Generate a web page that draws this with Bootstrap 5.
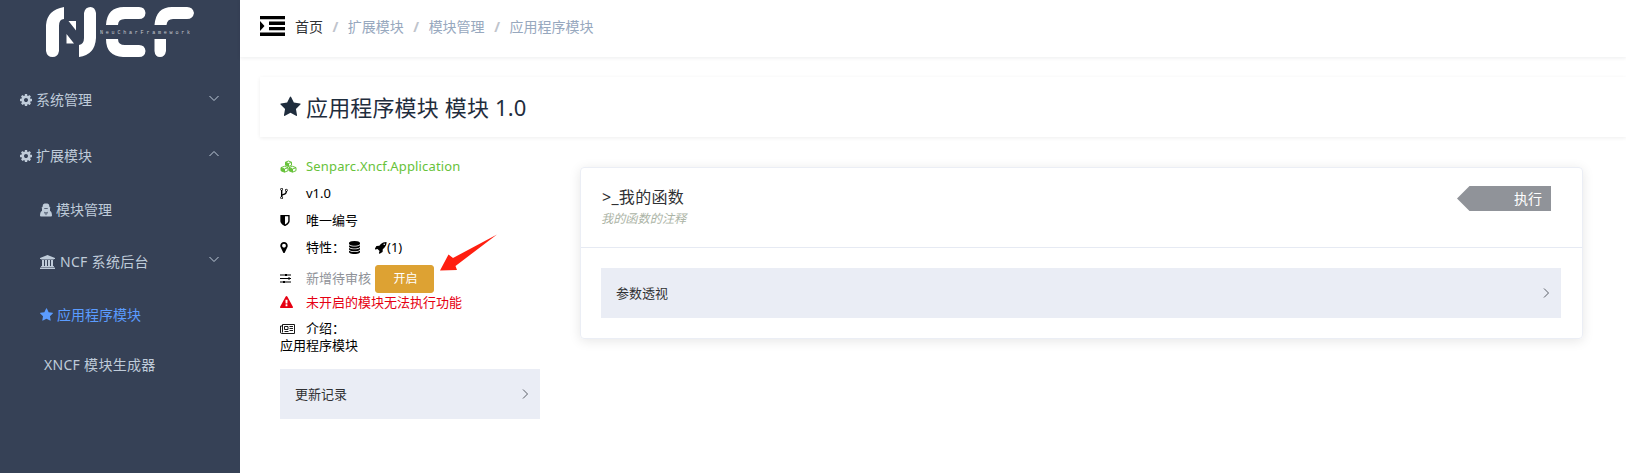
<!DOCTYPE html>
<html lang="zh-CN">
<head>
<meta charset="utf-8">
<meta name="viewport" content="width=device-width, initial-scale=1">
<title>NCF</title>
<link href="https://cdn.jsdelivr.net/npm/bootstrap@5.3.0/dist/css/bootstrap.min.css" rel="stylesheet">
<style>
body{font-family:"Noto Sans","Noto Sans CJK SC",sans-serif;font-size:13px;line-height:17px;color:#000;background:#fff;height:473px;overflow:hidden}
svg{display:block;flex:none;fill:currentColor}
.side{width:240px;height:473px;background:#364156;color:#bfcbd9;font-size:14px;line-height:20px}
.logo{margin:7px 0 0 46px}
.menu{margin-top:15px}
.menu a{color:inherit;text-decoration:none;display:flex;align-items:center;height:56px;padding:0 20px}
.menu a.sub{height:53px;padding-left:40px;position:static}
.menu a.first{height:51px}
.menu a.on{color:#5b9cff}
.menu span{white-space:pre}
.wide{letter-spacing:.3px}
.chev{fill:none;stroke:currentColor;stroke-width:1}
.menu .chev{margin-top:-5px}
.top{height:57px;box-shadow:0 1px 4px rgba(0,21,41,.08);padding:0 0 5px 20px;font-size:14px}
.crumb{color:#97a8be}
.crumb i{font-style:normal;font-weight:700;color:#c0c4cc;margin:0 9.5px}
.titlebox{margin:20px 0 0 20px;height:60px;padding:0 0 1px 20px;box-shadow:0 1px 4px rgba(0,0,0,.07);color:#1f2d3d;font-size:22px;line-height:30px}
.info{width:260px;margin-left:40px;padding-top:16px}
.line{height:27px;display:flex;align-items:center}
.ic{width:26px;flex:none}
.openbtn{--bs-btn-bg:#dda233;--bs-btn-color:#fff;--bs-btn-border-color:#dda233;--bs-btn-font-size:12px;--bs-btn-padding-y:0;--bs-btn-padding-x:0;width:59px;height:28px;line-height:1;--bs-btn-border-radius:3px;margin:1px 0 0 4px;padding-left:2px}
.fold{background:#eaedf5;height:50px;padding:0 11px 0 15px;color:#303133}
.fold .chev{stroke:#5a5e66}
.arrow{position:absolute;left:440px;top:233px;color:#ff1f10}
.fn{width:1003px;margin:30px 0 0 40px;height:172px;border:1px solid #ebeef5;border-radius:4px;box-shadow:0 2px 12px rgba(0,0,0,.1);color:#303133}
.fnhead{height:80px;border-bottom:1px solid #e6eaf3;padding:18px 31px 0 21px}
.run{width:94px;height:25px;background:#909399;color:#fff;font-size:14px;line-height:25px;padding-right:9px;clip-path:polygon(0 50%,12.5px 0,100% 0,100% 100%,12.5px 100%)}
.note{font-style:italic;color:#acb4a6;font-size:12.2px;line-height:16px;margin:3px 0 0 -1px}
</style>
</head>
<body>
<svg class="d-none">
<symbol id="cog" viewBox="128 0 1536 1792"><path d="M1152 896q0-106-75-181t-181-75-181 75-75 181 75 181 181 75 181-75 75-181zm512-109v222q0 12-8 23t-20 13l-185 28q-19 54-39 91 35 50 107 138 10 12 10 25t-9 23q-27 37-99 108t-94 71q-12 0-26-9l-138-108q-44 23-91 38-16 136-29 186-7 28-36 28h-222q-14 0-24.500-8.500t-11.500-21.500l-28-184q-49-16-90-37l-141 107q-10 9-25 9-14 0-25-11-126-114-165-168-7-10-7-23 0-12 8-23 15-21 51-66.500t54-70.500q-27-50-41-99l-183-27q-13-2-21-12.500t-8-23.500v-222q0-12 8-23t19-13l186-28q14-46 39-92-40-57-107-138-10-12-10-24 0-10 9-23 26-36 98.500-107.500t94.500-71.500q13 0 26 10l138 107q44-23 91-38 16-136 29-186 7-28 36-28h222q14 0 24.500 8.500t11.500 21.500l28 184q49 16 90 37l142-107q9-9 24-9 13 0 25 10 129 119 165 170 7 8 7 22 0 12-8 23-15 21-51 66.500t-54 70.500q26 50 41 98l183 28q13 2 21 12.500t8 23.500z"/></symbol>
<symbol id="star" viewBox="64 0 1664 1792"><path d="M1728 647q0 22-26 48l-363 354 86 500q1 7 1 20 0 21-10.500 35.500t-30.500 14.500q-19 0-40-12l-449-236-449 236q-22 12-40 12-21 0-31.500-14.500t-10.500-35.500q0-6 2-20l86-500-364-354q-25-27-25-48 0-37 56-46l502-73 225-455q19-41 49-41t49 41l225 455 502 73q56 9 56 46z"/></symbol>
</svg>
<div class="d-flex">
<aside class="side flex-shrink-0">
<svg class="logo" width="148" height="50" viewBox="0 0 148 50" fill="#fff" style="color:#fff">
<path d="M18 0V12Q13 12 13 19V44Q12 50 6.500 50Q1 50 0 44V18Q1 3 18 0Z"/>
<path d="M22.500 14H30V23.500ZM20.500 27L28 36.500H20.500Z"/>
<path d="M38 6Q39 0 44.500 0Q49 0 50 6V31Q49 48 33 50V38Q38 37 38 31Z"/>
<path d="M60 18Q61 0 78 0H93Q99 0 99.500 6Q99 12 93 12H79Q72 12 72 18ZM60 32H72Q72 38 79 38H93Q99 38 99.500 44Q99 50 93 50H77Q60 49 60 32Z"/>
<path d="M108.500 18Q110 0 126 0H141Q147 0 148 6Q147 12 141 12H127Q121 12 120.500 18ZM108.500 32H120V44Q119 50 114 50Q109 50 108.500 44Z"/>
<text x="54" y="27" font-family="Liberation Mono" font-size="5" textLength="90" opacity=".7">NeuCharFramework</text>
</svg>
<nav class="menu">
<a href="#"><svg width="12" height="14"><use href="#cog"/></svg><span class="ms-1">系统管理</span><svg class="chev ms-auto" width="12" height="8"><path d="M1.500 2L6 6.500L10.500 2"/></svg></a>
<a href="#"><svg width="12" height="14"><use href="#cog"/></svg><span class="ms-1">扩展模块</span><svg class="chev ms-auto" width="12" height="8"><path d="M1.500 6L6 1.500L10.500 6"/></svg></a>
<a class="sub first" href="#"><svg width="12" height="14" viewBox="0 0 12 14"><path fill-rule="evenodd" d="M3 1.500L4.500 .5H7.500L9 1.500L9.500 4L10.500 4.700L10 5.500V7.800L11.300 9Q12 10.500 12 12.500Q12 13.500 11 13.500H1Q0 13.500 0 12.500Q0 10.500 .7 9L2 7.800V5.500L1.500 4.700L2.500 4ZM4 5.300L5 6L6 5.500L7 6L8 5.300L7.500 4.900H4.500ZM4.200 8.700L5.300 12.500L5.700 9.300ZM7.800 8.700L6.300 9.300L6.700 12.500Z"/></svg><span class="ms-1">模块管理</span></a>
<a class="sub" href="#"><svg width="15" height="14" viewBox="0 0 1920 1792"><path d="M960 0l960 384v128h-128q0 26-20.500 45t-48.500 19h-1526q-28 0-48.500-19t-20.500-45h-128v-128zm-704 640h256v768h128v-768h256v768h128v-768h256v768h128v-768h256v768h59q28 0 48.500 19t20.500 45v64h-1664v-64q0-26 20.500-45t48.500-19h59v-768zm1595 960q28 0 48.500 19t20.500 45v128h-1920v-128q0-26 20.500-45t48.500-19h1782z"/></svg><span class="wide" style="margin-left:5px">NCF 系统后台</span><svg class="chev ms-auto" width="12" height="8"><path d="M1.500 2L6 6.500L10.500 2"/></svg></a>
<a class="sub on" href="#"><svg width="13" height="14"><use href="#star"/></svg><span class="ms-1">应用程序模块</span></a>
<a class="sub" href="#" style="padding-left:44px;height:47px"><span class="wide">XNCF 模块生成器</span></a>
</nav>
</aside>
<main class="flex-grow-1">
<header class="top d-flex align-items-center">
<svg width="25" height="20" viewBox="0 0 25 20"><path d="M0 0H25V3.300H0ZM9 5.600H25V9H9ZM9 11H25V14.300H9ZM0 16.500H25V20H0ZM0 5L4.500 10L0 15Z"/></svg>
<div class="crumb d-flex" style="margin-left:10px"><span style="color:#303133">首页</span><i>/</i><span>扩展模块</span><i>/</i><span>模块管理</span><i>/</i><span>应用程序模块</span></div>
</header>
<h1 class="titlebox d-flex align-items-center mb-0 fw-normal"><svg width="21" height="22"><use href="#star"/></svg><span style="margin-left:5px;letter-spacing:.15px">应用程序模块 模块 1.0</span></h1>
<div class="d-flex align-items-start">
<section class="info flex-shrink-0">
<div class="line" style="color:#67c23a"><div class="ic"><svg width="17" height="13" viewBox="0 0 17 13" stroke="currentColor" stroke-width="1" style="fill:none"><path d="M8.500 1L11.500 2.200V5.300L8.500 6.500L5.500 5.300V2.200ZM5.500 2.300L8.500 3.500L11.500 2.300M8.500 3.500V6.500M4.500 6.300L8 7.600V10.700L4.500 12.200L1 10.700V7.600ZM1 7.700L4.500 9L8 7.700M4.500 9V12M12.500 6.300L16 7.600V10.700L12.500 12.200L9 10.700V7.600ZM9 7.700L12.500 9L16 7.700M12.500 9V12"/><path fill="currentColor" stroke="none" d="M5.500 2.300L8.500 3.500V6.500L5.500 5.300ZM1 7.700L4.500 9V12.200L1 10.700ZM9 7.700L12.500 9V12.200L9 10.700Z"/></svg></div><span style="letter-spacing:.16px">Senparc.Xncf.Application</span></div>
<div class="line"><div class="ic"><svg width="8" height="13" viewBox="384 0 1024 1792"><path d="M672 1472q0-40-28-68t-68-28-68 28-28 68 28 68 68 28 68-28 28-68zm0-1152q0-40-28-68t-68-28-68 28-28 68 28 68 68 28 68-28 28-68zm640 128q0-40-28-68t-68-28-68 28-28 68 28 68 68 28 68-28 28-68zm96 0q0 52-26 96.500t-70 69.500q-2 287-226 414-67 38-203 81-128 40-169.500 71t-41.500 100v26q44 25 70 69.500t26 96.500q0 80-56 136t-136 56-136-56-56-136q0-52 26-96.500t70-69.500v-820q-44-25-70-69.500t-26-96.500q0-80 56-136t136-56 136 56 56 136q0 52-26 96.500t-70 69.500v497q54-26 154-57 55-17 87.500-29.500t70.500-31 59-39.500 40.500-51 28-69.500 8.500-91.500q-44-25-70-69.500t-26-96.500q0-80 56-136t136-56 136 56 56 136z"/></svg></div>v1.0</div>
<div class="line"><div class="ic"><svg width="10" height="13" viewBox="256 0 1280 1792"><path d="M1344 960v-640h-448v1137q119-63 213-137 235-184 235-360zm192-768v768q0 86-33.500 170.500t-83 150-118 127.500-126.500 103-121 77.500-89.500 49.500-42.500 20q-12 6-26 6t-26-6q-16-7-42.500-20t-89.500-49.500-121-77.500-126.500-103-118-127.500-83-150-33.500-170.500v-768q0-26 19-45t45-19h1152q26 0 45 19t19 45z"/></svg></div>唯一编号</div>
<div class="line"><div class="ic"><svg width="8" height="13" viewBox="384 0 1024 1792"><path d="M1152 640q0-106-75-181t-181-75-181 75-75 181 75 181 181 75 181-75 75-181zm256 0q0 109-33 179l-364 774q-16 33-47.500 52t-67.500 19-67.500-19-46.500-52l-365-774q-33-70-33-179 0-212 150-362t362-150 362 150 150 362z"/></svg></div><span style="width:43px">特性：</span><svg width="11" height="13" viewBox="128 0 1536 1792"><path d="M896 768q237 0 443-43t325-127v170q0 69-103 128t-280 93.500-385 34.500-385-34.500-280-93.500-103-128v-170q119 84 325 127t443 43zm0 768q237 0 443-43t325-127v170q0 69-103 128t-280 93.500-385 34.500-385-34.500-280-93.500-103-128v-170q119 84 325 127t443 43zm0-384q237 0 443-43t325-127v170q0 69-103 128t-280 93.500-385 34.500-385-34.500-280-93.500-103-128v-170q119 84 325 127t443 43zm0-1152q208 0 385 34.500t280 93.500 103 128v128q0 69-103 128t-280 93.500-385 34.500-385-34.500-280-93.500-103-128v-128q0-69 103-128t280-93.500 385-34.500z"/></svg><svg width="12" height="13" viewBox="64 0 1664 1792" style="margin-left:15px"><path d="M1440 448q0-40-28-68t-68-28-68 28-28 68 28 68 68 28 68-28 28-68zm224-288q0 249-75.500 430.500t-253.500 360.500q-81 80-195 176l-20 379q-2 16-16 26l-384 224q-7 4-16 4-12 0-23-9l-64-64q-13-14-8-32l85-276-281-281-276 85q-3 1-9 1-14 0-23-9l-64-64q-17-19-5-39l224-384q10-14 26-16l379-20q96-114 176-195 188-187 358-258t431-71q14 0 24 9.500t10 22.500z"/></svg><span>(1)</span></div>
<div class="line" style="height:34px;color:#909399"><div class="ic text-black"><svg width="11" height="11" viewBox="0 0 11 11"><path d="M0 1.500H11V2.500H0ZM0 5H11V6H0ZM0 8.500H11V9.500H0ZM5 1H7V3H5ZM8 4.500H10V6.500H8ZM3 8H5V10H3Z"/></svg></div>新增待审核<button class="btn openbtn">开启</button></div>
<div class="line" style="height:14px;color:#e60012"><div class="ic"><svg width="13" height="13" viewBox="0 0 1792 1792"><path d="M1024 1375v-190q0-14-9.500-23.500t-22.500-9.500h-192q-13 0-22.500 9.500t-9.500 23.500v190q0 14 9.500 23.500t22.500 9.500h192q13 0 22.500-9.500t9.500-23.500zm-2-374l18-459q0-12-10-19-13-11-24-11h-220q-11 0-24 11-10 7-10 21l17 457q0 10 10 16.500t24 6.500h185q14 0 23.500-6.500t10.500-16.500zm-14-934l768 1408q35 63-2 126-17 29-46.500 46t-63.500 17h-1536q-34 0-63.500-17t-46.500-46q-37-63-2-126l768-1408q17-31 47-49t65-18 65 18 47 49z"/></svg></div>未开启的模块无法执行功能</div>
<div class="line" style="height:17px;margin-top:11px"><div class="ic"><svg width="15" height="12" viewBox="0 0 15 12" style="fill:none;stroke:currentColor;stroke-width:.9"><path d="M2.500 1.500H14.500V10.500H1.500Q.5 10.500 .5 9V3H2.500ZM2.500 2V9.500M4.500 3.500H8V6.500H4.500ZM9.500 3.500H13M9.500 5.500H13M9.500 7.500H13M4.500 8.500H8.500"/></svg></div>介绍：</div>
<div style="line-height:17px">应用程序模块</div>
<div class="fold d-flex align-items-center justify-content-between" style="margin-top:15px"><span>更新记录</span><svg class="chev" width="7" height="12"><path d="M1 1.500L5.500 6L1 10.500"/></svg></div>
</section>
<section class="fn flex-shrink-0">
<div class="fnhead d-flex justify-content-between">
<div><div style="font-size:16px;line-height:22px;letter-spacing:.3px">&gt;_我的函数</div><div class="note">我的函数的注释</div></div>
<div class="run text-end">执行</div>
</div>
<div style="padding:20px 21px 20px 20px"><div class="fold d-flex align-items-center justify-content-between"><span>参数透视</span><svg class="chev" width="7" height="12"><path d="M1 1.500L5.500 6L1 10.500"/></svg></div></div>
</section>
</div>
</main>
</div>
<svg class="arrow" width="58" height="39" viewBox="0 0 58 39"><path d="M0 37.500L8.500 21.500L13 25L57 1.500L15.500 33L17 37Z"/></svg>
<script src="https://cdn.jsdelivr.net/npm/bootstrap@5.3.0/dist/js/bootstrap.bundle.min.js"></script>
</body>
</html>
